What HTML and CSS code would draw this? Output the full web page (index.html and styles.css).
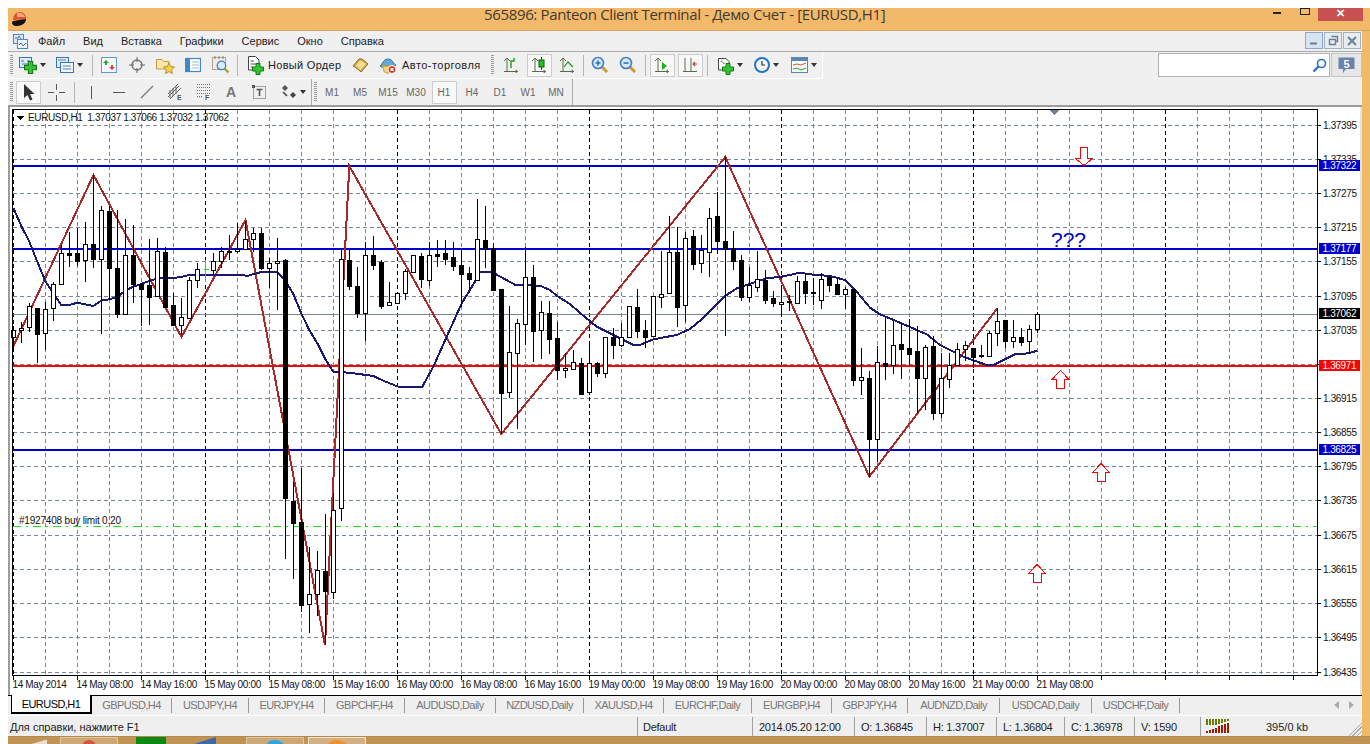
FILE: index.html
```html
<!DOCTYPE html>
<html lang="ru">
<head>
<meta charset="utf-8">
<title>565896: Panteon Client Terminal</title>
<link rel="stylesheet" href="styles.css">
</head>
<body>
<svg class="defs" width="0" height="0" aria-hidden="true">
  <defs>
    <symbol id="plus" viewBox="0 0 12 12"><path d="M4 0.5H8V4H11.5V8H8V11.5H4V8H0.5V4H4Z" fill="#35c435" stroke="#127a12"/></symbol>
    <symbol id="lens" viewBox="0 0 18 18"><path d="M11 11L16 16" stroke="#c79a2c" stroke-width="3"/><circle cx="7" cy="7" r="5.5" fill="#d8e9fb" stroke="#3f7fc4" stroke-width="1.6"/></symbol>
    <symbol id="axes" viewBox="0 0 16 16"><path d="M4 1V15M1 14.5H15M1 4L4 1L7 4" fill="none" stroke="#5a6b4a"/><path d="M12 14.5L14 13M12 14.5L14 16" fill="none" stroke="#5a6b4a"/></symbol>
  </defs>
</svg>
<div class="win">
  <header class="title">
    <svg class="logo" width="16" height="16" viewBox="0 0 16 16"><path d="M2 9C2 4 5 1 9 1C13 1 15 4 15 8Z" fill="#e8502a"/><path d="M6 2C9 1 13 2 14 6L6 6Z" fill="#f6a77e"/><path d="M1 11C3 9 10 9 15 8C15 12 11 15 6 15C3 15 1 14 1 11Z" fill="#111"/></svg>
    <span class="title-text">565896: Panteon Client Terminal - Демо Счет - [EURUSD,H1]</span>
    <div class="win-btns">
      <span class="w-min"></span>
      <span class="w-max"></span>
      <span class="w-close">✕</span>
    </div>
  </header>
  <div class="frame">
    <nav class="menu">
      <svg class="menu-ico" width="15" height="15" viewBox="0 0 15 15"><rect x="0.5" y="0.5" width="10" height="9" fill="#dbe9f7" stroke="#4a86c8"/><rect x="4.5" y="5.5" width="10" height="9" fill="#eef5fb" stroke="#4a86c8"/><path d="M2 4H5L6 2L8 5M6 11L8 9L10 12L13 9" fill="none" stroke="#4a6f9a"/></svg>
      <span>Файл</span><span>Вид</span><span>Вставка</span><span>Графики</span><span>Сервис</span><span>Окно</span><span>Справка</span>
      <div class="doc-btns">
        <span class="doc-btn active"><svg width="10" height="10" viewBox="0 0 10 10"><path d="M1 7.5H8" stroke="#6a7f93" stroke-width="2"/></svg></span>
        <span class="doc-btn"><svg width="11" height="11" viewBox="0 0 11 11"><path d="M3.5 1.5H9.5V6.5H7.5M1.5 4.5H7.5V9.5H1.5Z" fill="none" stroke="#6a7f93" stroke-width="1.4"/></svg></span>
        <span class="doc-btn"><svg width="10" height="10" viewBox="0 0 10 10"><path d="M1 1L9 9M9 1L1 9" stroke="#6a7f93" stroke-width="2"/></svg></span>
      </div>
    </nav>
    <div class="row row-1">
      <div class="tb tb-1">
        <span class="grip grip-8"></span>
        <span class="ib drop w34 p3"><svg width="18" height="18" viewBox="0 0 18 18"><rect x="0.5" y="1.5" width="12" height="10" fill="#dcebf9" stroke="#3f74ad"/><path d="M2 5H5M8 5H11M3 8H10" stroke="#3f74ad"/><use href="#plus" x="5" y="5" width="13" height="13"/></svg><i class="tri"></i></span>
        <span class="ib drop w38 p6"><svg width="18" height="18" viewBox="0 0 18 18"><rect x="0.5" y="1.5" width="12" height="10" fill="#dcebf9" stroke="#3f74ad"/><rect x="4.5" y="6.5" width="13" height="10" fill="#eef5fc" stroke="#3f74ad"/><path d="M2 4H10M7 10H15M7 13H15" stroke="#5d86b3"/></svg><i class="tri"></i></span>
        <i class="sep"></i>
        <span class="ib"><svg width="16" height="16" viewBox="0 0 16 16"><rect x="0.5" y="0.5" width="15" height="15" fill="#f4f8fc" stroke="#5d9bd5"/><path d="M5 3L8 6H6V8H4V6H2Z" fill="#2aa52a"/><path d="M11 13L8 10H10V8H12V10H14Z" fill="#d8452a"/></svg></span>
        <span class="ib"><svg width="16" height="16" viewBox="0 0 16 16"><circle cx="8" cy="8" r="5" fill="none" stroke="#777" stroke-width="1.4"/><path d="M8 0V5M8 11V16M0 8H5M11 8H16" stroke="#666"/></svg></span>
        <span class="ib"><svg width="19" height="17" viewBox="0 0 19 17"><path d="M0.5 2.5H6L8 4.5H13V12H0.5Z" fill="#fbe6a6" stroke="#b89a4a"/><path d="M13 6L14.6 9.5L18.5 10L15.6 12.6L16.4 16.5L13 14.5L9.6 16.5L10.4 12.6L7.5 10L11.4 9.5Z" fill="#f6d34e" stroke="#b8902a"/></svg></span>
        <span class="ib"><svg width="16" height="16" viewBox="0 0 16 16"><rect x="0.5" y="1.5" width="15" height="13" fill="#fff" stroke="#3f86cc" stroke-width="1.2"/><rect x="1" y="2" width="4" height="12" fill="#3f86cc"/><path d="M7 5H14M7 8H14M7 11H14" stroke="#9ab7d3"/></svg></span>
        <span class="ib"><svg width="18" height="18" viewBox="0 0 18 18"><rect x="0.5" y="1.5" width="13" height="12" fill="#f2ece4" stroke="#b4a393"/><path d="M3 0V3M7 0V3M11 0V3" stroke="#8a7a6a"/><use href="#lens" x="4" y="4" width="14" height="14"/></svg></span>
        <i class="sep s2b"></i>
        <span class="txt-btn order"><svg width="17" height="19" viewBox="0 0 17 19"><path d="M1.5 0.5H8.5L12 4V14H1.5Z" fill="#fff" stroke="#444"/><path d="M3.5 5H7M3.5 8H9M3.5 11H6" stroke="#555"/><use href="#plus" x="5" y="7" width="12" height="12"/></svg><span class="spaced sp-order">Новый Ордер</span></span>
        <span class="ib"><svg width="17" height="17" viewBox="0 0 17 17"><path d="M1 9L7 2C9 1 12 3 16 7L9 15C6 12 3 10 1 9Z" fill="#d9a93f" stroke="#8a6a1e"/><path d="M3.500 9L8 3.500C10 4 12 5.500 14 7L8.500 13C7 11.500 5 10 3.500 9Z" fill="#f2dc94"/></svg></span>
        <span class="txt-btn auto"><svg width="18" height="18" viewBox="0 0 18 18"><path d="M1 10C4 8 4 3 9 3C14 3 14 8 17 9C13 13 5 13 1 10Z" fill="#63a8d8" stroke="#3b6f96"/><path d="M3 10C6 14 3 16 8 17C11 17 14 15 15 10Z" fill="#f5d569" stroke="#b9952b"/><circle cx="13" cy="13.5" r="4" fill="#d63a22" stroke="#fff"/><rect x="11.5" y="12" width="3" height="3" fill="#fff"/></svg><span class="spaced sp-auto">Авто-торговля</span></span>
        <span class="grip grip-8 g3"></span>
        <span class="ib"><svg width="16" height="16" viewBox="0 0 16 16"><use href="#axes" width="16" height="16"/><path d="M8 11V4H11V1" fill="none" stroke="#1a9a1a" stroke-width="1.4"/></svg></span>
        <span class="ib sel"><svg width="16" height="16" viewBox="0 0 16 16"><use href="#axes" width="16" height="16"/><rect x="8" y="3" width="5" height="7" fill="#22c422" stroke="#0d5c0d"/><path d="M10.5 0V3M10.5 10V13" stroke="#0d5c0d"/></svg></span>
        <span class="ib"><svg width="16" height="16" viewBox="0 0 16 16"><use href="#axes" width="16" height="16"/><path d="M5 10L9 5L14 10" fill="none" stroke="#1a9a1a" stroke-width="1.2"/></svg></span>
        <i class="sep s2b"></i>
        <span class="ib"><svg width="18" height="18" viewBox="0 0 18 18"><use href="#lens" width="18" height="18"/><path d="M4.5 7H9.5M7 4.5V9.5" stroke="#2f6fb5" stroke-width="1.6"/></svg></span>
        <span class="ib"><svg width="18" height="18" viewBox="0 0 18 18"><use href="#lens" width="18" height="18"/><path d="M4.5 7H9.5" stroke="#2f6fb5" stroke-width="1.6"/></svg></span>
        <i class="sep s3"></i>
        <span class="ib sel"><svg width="16" height="16" viewBox="0 0 16 16"><use href="#axes" width="16" height="16"/><path d="M8 5L13 9L8 13Z" fill="#1fae1f"/></svg></span>
        <span class="ib sel"><svg width="16" height="16" viewBox="0 0 16 16"><path d="M3 1V15M1 14.5H15M9 1V15" fill="none" stroke="#5a6b4a"/><path d="M11 7H15M11 7L13 5M11 7L13 9" fill="none" stroke="#b5432a" stroke-width="1.2"/></svg></span>
        <i class="sep s3"></i>
        <span class="ib drop w37 p7"><svg width="17" height="19" viewBox="0 0 17 19"><path d="M1.5 2.5H9L12 5.5V14H1.5Z" fill="#fff" stroke="#444"/><path d="M4 6C5 3 6 9 8 7" fill="none" stroke="#666"/><use href="#plus" x="5" y="7" width="12" height="12"/></svg><i class="tri"></i></span>
        <span class="ib drop w37 p7"><svg width="16" height="16" viewBox="0 0 16 16"><circle cx="8" cy="8" r="7" fill="#f4f8fc" stroke="#2375c4" stroke-width="2"/><path d="M8 4V8H11" fill="none" stroke="#234" stroke-width="1.2"/></svg><i class="tri"></i></span>
        <span class="ib drop w37 p7"><svg width="17" height="16" viewBox="0 0 17 16"><rect x="0.5" y="0.5" width="16" height="15" fill="#f7fafc" stroke="#5a88b5"/><rect x="1" y="1" width="15" height="3" fill="#5a88b5"/><path d="M2 8L6 7L10 8L15 6" fill="none" stroke="#d8552a"/><path d="M2 12L6 11L10 13L15 11" fill="none" stroke="#2aa52a"/></svg><i class="tri"></i></span>
      </div>
      <div class="search">
        <svg class="search-ico" width="15" height="15" viewBox="0 0 15 15"><circle cx="9.5" cy="5.5" r="4" fill="#fff" stroke="#2f6fc4" stroke-width="1.6"/><path d="M6.5 8.5L1.5 13.5" stroke="#2f6fc4" stroke-width="2.4"/></svg>
      </div>
      <span class="msg"><svg width="17" height="17" viewBox="0 0 17 17"><path d="M0.5 0.5H16.5V12H8L5 16V12H0.5Z" fill="#6a82ac"/><text x="8.5" y="10.5" class="msg-num">5</text></svg></span>
    </div>
    <div class="row row-2">
      <div class="tb tb-2">
        <span class="grip grip-6"></span>
        <span class="ib sel"><svg width="16" height="18" viewBox="0 0 16 18"><path d="M4 1V15L7.5 12L10 17.5L12.5 16.5L10 11H14.5Z" fill="#333"/></svg></span>
        <span class="ib"><svg width="17" height="17" viewBox="0 0 17 17"><path d="M8.5 0V6M8.5 11V17M0 8.5H6M11 8.5H17" stroke="#555"/></svg></span>
        <i class="sep"></i>
        <span class="ib"><svg width="16" height="16" viewBox="0 0 16 16"><path d="M8.5 2V15" stroke="#555"/></svg></span>
        <span class="ib"><svg width="16" height="16" viewBox="0 0 16 16"><path d="M2 8.5H14" stroke="#555"/></svg></span>
        <span class="ib"><svg width="16" height="16" viewBox="0 0 16 16"><path d="M2 14L14 2" stroke="#777" stroke-width="1.2"/></svg></span>
        <span class="ib"><svg width="17" height="18" viewBox="0 0 17 18"><path d="M1 11L11 1M1 14L12 3M3 16L14 5M3 7V15M6 5V13M9 3V11" stroke="#666" fill="none"/><text x="10" y="17" class="mini">E</text></svg></span>
        <span class="ib"><svg width="15" height="18" viewBox="0 0 15 18"><path d="M1 1.500H14M1 4.500H14M1 7.500H14M1 10.500H14M1 13.500H7" stroke="#777" stroke-dasharray="1 1"/><text x="9" y="17" class="mini">F</text></svg></span>
        <span class="ib glyph">A</span>
        <span class="ib"><svg width="15" height="15" viewBox="0 0 15 15"><rect x="1.500" y="1.500" width="12" height="12" fill="none" stroke="#555" stroke-dasharray="1 1"/><path d="M0 0H3V3H0Z" fill="#555"/><path d="M4.500 4.500H10.500M7.500 4.500V11" stroke="#555" stroke-width="1.6"/></svg></span>
        <span class="ib drop w34 p8"><svg width="16" height="15" viewBox="0 0 16 15"><path d="M1 3L4 0L7 3L4 6Z" fill="#555"/><path d="M9 10L12 7L15 10L12 13Z" fill="#444"/><path d="M2 7L6 11" stroke="#444" stroke-width="1.6"/></svg><i class="tri"></i></span>
        <i class="sep s5 tall"></i>
        <span class="grip grip-6"></span>
        <span class="ib tf">M1</span><span class="ib tf">M5</span><span class="ib tf">M15</span><span class="ib tf">M30</span><span class="ib tf sel">H1</span><span class="ib tf">H4</span><span class="ib tf">D1</span><span class="ib tf">W1</span><span class="ib tf">MN</span>
        <i class="sep s2 tall"></i>
      </div>
    </div>
    <main class="chart-pane">
      <svg class="chart" viewBox="8 105 1354 590" width="1354" height="590">
        <path class="grid" d="M13 125.500H1317M13 159.500H1317M13 193.500H1317M13 227.500H1317M13 261.500H1317M13 296.500H1317M13 330.500H1317M13 364.500H1317M13 398.500H1317M13 432.500H1317M13 466.500H1317M13 500.500H1317M13 535.500H1317M13 569.500H1317M13 603.500H1317M13 637.500H1317M13 672.500H1317"/>
        <path class="grid" d="M45.500 110V675M77.500 110V675M109.500 110V675M141.500 110V675M173.500 110V675M237.500 110V675M269.500 110V675M301.500 110V675M333.500 110V675M365.500 110V675M429.500 110V675M461.500 110V675M493.500 110V675M525.500 110V675M557.500 110V675M621.500 110V675M653.500 110V675M685.500 110V675M717.500 110V675M749.500 110V675M813.500 110V675M845.500 110V675M877.500 110V675M909.500 110V675M941.500 110V675M1005.500 110V675M1037.500 110V675M1069.500 110V675M1101.500 110V675M1133.500 110V675M1197.500 110V675M1229.500 110V675M1261.500 110V675M1293.500 110V675"/>
        <path class="grid-sep" d="M13.500 110V675M205.500 110V675M397.500 110V675M589.500 110V675M781.500 110V675M973.500 110V675M1165.500 110V675"/>
        <path class="bid" d="M13 314.500H1317"/>
        <path class="hl-blue" d="M13 166H1317M13 249H1317M13 450H1317"/>
        <path class="hl-red" d="M13 366H1317"/>
        <path class="hl-green" d="M13 526.500H1317"/>
        <polyline class="zigzag" points="13,347 93.500,175 181.500,337 245.500,220 325,645 349.300,166 501.300,434 725.300,157 869.300,476.700 997.300,308.300"/>
        <polyline class="ma" points="13.300,207.700 21.300,226 29.300,241.700 37.300,261.700 45.300,281 53.300,293.300 61.300,305 69.300,305 77.300,302.700 85.300,304.300 93.300,306 101.300,300.700 109.300,299.300 117.300,296.700 125.300,290.700 133.300,286.700 141.300,284 149.300,281 157.300,278.300 165.300,278 173.300,278 181.300,277 189.300,275 197.300,275 213.300,274.700 237.300,275 248,275.700 261.300,272 277.300,272 285.300,280.700 293.300,294 301.300,313.300 309.300,330 317.300,343.300 325.300,359.300 333.300,371.700 349.300,372.700 373.300,376 383.300,380.700 398.300,386.700 422.300,386.700 433.300,366.700 446.700,336.700 461.700,303.300 475,281.700 480,272 491.700,272 503.300,278.300 515,284.700 540,285.700 550,290 556.700,295.700 570,304 583.300,315.700 596.700,326.700 616.700,336.700 633.300,345 640,345 653.300,339.300 676.700,335 690,329 700,320.700 725,296 736.700,288.300 766.700,278.300 781.700,276.700 800,272.700 813.300,274.700 830,276 845,280 856.700,291.700 870,307.700 880,314.300 900,322.700 926.700,334.300 940,345 963.300,356.700 986.700,365 993.300,365 1010,356.700 1015,354.300 1028.300,353.300 1037.300,350.700"/>
        <g id="candles"></g>
        <rect class="frame-line" x="12.500" y="109.500" width="1305" height="566"/>
        <path class="ticks" d="M1318 125.500H1321M1318 159.500H1321M1318 193.500H1321M1318 227.500H1321M1318 261.500H1321M1318 296.500H1321M1318 330.500H1321M1318 364.500H1321M1318 398.500H1321M1318 432.500H1321M1318 466.500H1321M1318 500.500H1321M1318 535.500H1321M1318 569.500H1321M1318 603.500H1321M1318 637.500H1321M1318 672.500H1321M13.500 676V680M77.500 676V680M141.500 676V680M205.500 676V680M269.500 676V680M333.500 676V680M397.500 676V680M461.500 676V680M525.500 676V680M589.500 676V680M653.500 676V680M717.500 676V680M781.500 676V680M845.500 676V680M909.500 676V680M973.500 676V680M1037.500 676V680M1101.500 676V680M1165.500 676V680M1229.500 676V680M1293.500 676V680"/>
        <path class="shift-mark" d="M1050 110H1059L1054.500 115Z"/>
        <path class="arrow" d="M1080.500 147.500H1087.500V158.500H1092.500L1084 165.500L1075.500 158.500H1080.500Z"/>
        <path class="arrow" d="M1060.500 370.500L1069 379.500H1064.500V388.500H1056.500V379.500H1052Z"/>
        <path class="arrow" d="M1101 463.500L1109.500 472.500H1105V481.500H1097V472.500H1092.500Z"/>
        <path class="arrow" d="M1037 564.500L1045.500 573.500H1041V582.500H1033V573.500H1028.500Z"/>
        <text x="1051" y="247" class="qmarks">???</text>
        <path class="legend-tri" d="M16.500 116H24.500L20.500 120Z"/>
        <text x="28" y="121" class="legend" textLength="201">EURUSD,H1  1.37037 1.37066 1.37032 1.37062</text>
        <text x="19" y="524" class="legend" textLength="102">#1927408 buy limit 0.20</text>
        <g class="prices">
          <text x="1323" y="128.500">1.37395</text><text x="1323" y="162.500">1.37335</text><text x="1323" y="196.500">1.37275</text><text x="1323" y="230.500">1.37215</text><text x="1323" y="264.500">1.37155</text><text x="1323" y="299.500">1.37095</text><text x="1323" y="333.500">1.37035</text><text x="1323" y="401.500">1.36915</text><text x="1323" y="435.500">1.36855</text><text x="1323" y="469.500">1.36795</text><text x="1323" y="503.500">1.36735</text><text x="1323" y="538.500">1.36675</text><text x="1323" y="572.500">1.36615</text><text x="1323" y="606.500">1.36555</text><text x="1323" y="640.500">1.36495</text><text x="1323" y="675.500">1.36435</text>
        </g>
        <rect class="tag-blue" x="1319" y="160" width="41" height="11"/>
        <rect class="tag-blue" x="1319" y="243" width="41" height="11"/>
        <rect class="tag-black" x="1319" y="308" width="41" height="11"/>
        <rect class="tag-red" x="1319" y="360" width="41" height="11"/>
        <rect class="tag-blue" x="1319" y="444" width="41" height="11"/>
        <g class="tag-text">
          <text x="1322.500" y="169">1.37322</text><text x="1322.500" y="252">1.37177</text><text x="1322.500" y="317">1.37062</text><text x="1322.500" y="369">1.36971</text><text x="1322.500" y="453">1.36825</text>
        </g>
        <g class="dates">
          <text x="12.500" y="688">14 May 2014</text><text x="76.500" y="688">14 May 08:00</text><text x="140.500" y="688">14 May 16:00</text><text x="204.500" y="688">15 May 00:00</text><text x="268.500" y="688">15 May 08:00</text><text x="332.500" y="688">15 May 16:00</text><text x="396.500" y="688">16 May 00:00</text><text x="460.500" y="688">16 May 08:00</text><text x="524.500" y="688">16 May 16:00</text><text x="588.500" y="688">19 May 00:00</text><text x="652.500" y="688">19 May 08:00</text><text x="716.500" y="688">19 May 16:00</text><text x="780.500" y="688">20 May 00:00</text><text x="844.500" y="688">20 May 08:00</text><text x="908.500" y="688">20 May 16:00</text><text x="972.500" y="688">21 May 00:00</text><text x="1036.500" y="688">21 May 08:00</text>
        </g>
      </svg>
    </main>
    <div class="tabs">
      <span class="tab active">EURUSD,H1</span>
      <span class="tab w80">GBPUSD,H4</span>
      <span class="tab w77">USDJPY,H4</span>
      <span class="tab w76">EURJPY,H4</span>
      <span class="tab w80">GBPCHF,H4</span>
      <span class="tab w91">AUDUSD,Daily</span>
      <span class="tab w88">NZDUSD,Daily</span>
      <span class="tab w80">XAUUSD,H4</span>
      <span class="tab w88">EURCHF,Daily</span>
      <span class="tab w80">EURGBP,H4</span>
      <span class="tab w76">GBPJPY,H4</span>
      <span class="tab w92">AUDNZD,Daily</span>
      <span class="tab w92">USDCAD,Daily</span>
      <span class="tab w88">USDCHF,Daily</span>
      <span class="tab-nav"><i class="nav-l"></i><i class="nav-r"></i></span>
    </div>
    <footer class="status">
      <span class="cell c-help">Для справки, нажмите F1</span>
      <span class="cell c-prof">Default</span>
      <span class="cell c-date">2014.05.20 12:00</span>
      <span class="cell c-o">O: 1.36845</span>
      <span class="cell c-h">H: 1.37007</span>
      <span class="cell c-l">L: 1.36804</span>
      <span class="cell c-c">C: 1.36978</span>
      <span class="cell c-v">V: 1590</span>
      <span class="cell c-net">
        <svg class="conn" width="24" height="14" viewBox="0 0 24 14"><path d="M1 0V6M4 0V6M7 0V6M10 0V6M13 0V5M16 0V4M19 0V3M22 0V2" stroke="#6a7f00" stroke-width="2"/><path d="M1 12V14M4 11V14M7 10V14M10 9V14M13 7V14M16 6V14M19 5V14M22 4V14" stroke="#a01a00" stroke-width="2"/></svg>
        <span class="traffic">395/0 kb</span>
        <span class="resize"></span>
      </span>
    </footer>
  </div>
  <div class="taskbar">
    <i class="white-wedge"></i>
    <span class="task t1"><i class="dot red"></i></span>
    <i class="green-tile"></i>
    <i class="blue-wedge"></i>
    <span class="task t2"><i class="dot blue"></i></span>
    <span class="task t3"><i class="dot orange"></i></span>
  </div>
</div>
<script src="chart.js"></script>
</body>
</html>
```
FILE: styles.css
```css
* { box-sizing: border-box; }
html, body { margin: 0; height: 744px; overflow: hidden; background: #fff; }
body { font: 11px "Liberation Sans", Arial, sans-serif; color: #111; }
i { font-style: normal; display: block; }
.defs { position: absolute; }
.win { display: flex; flex-direction: column; height: 744px; padding: 8px 0 0 8px; }

.title { height: 23px; flex: none; display: flex; align-items: center; position: relative; background: #f3b96b; border-bottom: 1px solid #d9a45c; }
.logo { margin-left: 3px; }
.title-text { position: absolute; left: 476px; top: -1px; font: 15px/15px "Open Sans", sans-serif; letter-spacing: -.35px; color: #3f3a34; white-space: nowrap; }
.win-btns { margin-left: auto; display: flex; align-items: flex-start; align-self: flex-start; height: 13px; margin-right: 7px; }
.w-min { width: 8px; height: 2px; background: #222; margin: 4px 19px 0 0; }
.w-max { width: 10px; height: 7px; border: 1px solid #222; border-top-width: 1px; margin-right: 8px; }
.w-close { width: 45px; height: 13px; background: #c75050; color: #fff; font-size: 11px; line-height: 10px; text-align: center; font-weight: bold; overflow: hidden; }

.frame { flex: 1; min-height: 0; display: flex; flex-direction: column; border-right: 8px solid #f3b96b; background: #f0f0f0; }
.menu { height: 21px; flex: none; display: flex; align-items: center; gap: 18px; border-bottom: 1px solid #a9a9a9; padding-right: 1px; }
.menu > span { color: #222; }
.menu-ico { margin: 0 -8px 0 5px; flex: none; }
.doc-btns { margin-left: auto; display: flex; gap: 1px; align-self: flex-start; margin-top: 1px; }
.doc-btn { width: 18px; height: 17px; border: 1px solid #9fb2c3; background: #e8ecef; display: flex; align-items: center; justify-content: center; }
.doc-btn.active { background: #d5e5f2; border-color: #8fa8bf; }

.row { flex: none; display: flex; align-items: stretch; }
.row-1 { height: 27px; }
.row-2 { height: 26px; }
.tb { display: flex; align-items: center; }
.tb-1 { width: 815px; border-right: 1px solid #fff; border-bottom: 1px solid #fff; }
.grip { height: 20px; flex: none; background: repeating-linear-gradient(to bottom, #9a9a9a 0 1px, transparent 1px 2px) no-repeat 2px 0 / 3px 100%; }
.grip-8 { width: 8px; }
.grip-6 { width: 6px; }
.g3 { margin-left: 3px; }
.sep { width: 1px; height: 21px; background: #b5b5b5; margin: 0 2px 0 4px; flex: none; }
.s2b { margin-left: 2px; }
.s3 { margin-left: 3px; }
.s5 { margin: 0 0 0 4px; }
.s2 { margin: 0 0 0 2px; }
.tall { height: 26px; background: #a8a8a8; }
.ib { width: 28px; height: 23px; flex: none; display: flex; align-items: center; justify-content: center; }
.ib.sel { width: 25px; margin: 0 1.500px; background: #f8f8f8; border: 1px solid #cdcdcd; }
.drop { justify-content: flex-start; gap: 3px; }
.w34 { width: 34px; }
.w37 { width: 37px; }
.w38 { width: 38px; }
.p3 { padding-left: 3px; }
.p6 { padding-left: 6px; }
.p7 { padding-left: 7px; }
.p8 { padding-left: 8px; }
.tri { width: 0; height: 0; border: 3.500px solid transparent; border-top: 4px solid #333; border-bottom: 0; flex: none; }
.txt-btn { flex: none; display: flex; align-items: center; height: 23px; }
.order { width: 106px; padding-left: 7px; gap: 4px; }
.auto { width: 112px; padding-left: 5px; gap: 5px; }
.spaced { color: #222; font-size: 11px; white-space: nowrap; }
.sp-order { letter-spacing: .3px; }
.sp-auto { letter-spacing: .47px; }
.glyph { font-size: 14px; color: #777; font-weight: bold; }
.tf { font-size: 10px; color: #666; }
.mini { font: bold 7px "Liberation Sans", sans-serif; fill: #555; }
.search { width: 172px; height: 24px; margin: 1px 0 0 335px; background: #fff; border: 1px solid #b2b2b2; display: flex; align-items: center; justify-content: flex-end; padding-right: 2px; flex: none; }
.msg { width: 31px; height: 24px; margin: 1px 0 0 1px; background: #e6e6e6; border: 1px solid #c4c4c4; display: flex; align-items: center; justify-content: center; flex: none; }
.msg-num { font: bold 11px "Liberation Sans", sans-serif; fill: #fff; text-anchor: middle; }

.chart-pane { height: 590px; flex: none; background: #fff; box-shadow: inset 2px 2px 0 #9c9c9c, inset -2px 0 0 #e2e2e2; }
.chart { display: block; font-family: "Liberation Sans", Arial, sans-serif; shape-rendering: crispEdges; }
.grid { fill: none; stroke: #778899; stroke-width: 1; stroke-dasharray: 4 3; }
.grid-sep { fill: none; stroke: #000; stroke-width: 1; stroke-dasharray: 4 3; }
.bid { stroke: #778899; fill: none; }
.hl-blue { stroke: #0000cd; stroke-width: 2; fill: none; }
.hl-red { stroke: #ff0000; stroke-width: 2; fill: none; }
.hl-green { stroke: #22dd22; fill: none; stroke-dasharray: 8 5 2 5; }
.zigzag { fill: none; stroke: #a52a2a; stroke-width: 2; }
.ma { fill: none; stroke: #191970; stroke-width: 2; }
.frame-line { fill: none; stroke: #000; }
.ticks { stroke: #000; fill: none; }
.shift-mark { fill: #708090; }
.arrow { fill: #fff; stroke: #ff0000; }
.qmarks { font-size: 21px; fill: #0000cd; }
.legend-tri { fill: #000; }
.legend { font-size: 10px; fill: #111; white-space: pre; }
.prices text, .dates text { font-size: 10px; fill: #111; letter-spacing: -.35px; }
.tag-text text { font-size: 10px; fill: #fff; letter-spacing: -.35px; }
.tag-blue { fill: #0000cd; }
.tag-black { fill: #000; }
.tag-red { fill: #ff0000; }
.wick { stroke: #000; fill: none; }
.wick-g { stroke: #22dd22; fill: none; }
.body-w { fill: #fff; stroke: #000; }
.body-b { fill: #000; stroke: #000; }

.tabs { height: 21px; flex: none; display: flex; align-items: flex-start; background: #efefef; border-top: 1px solid #000; border-bottom: 1px solid #fff; padding-left: 3px; }
.tab { height: 15px; margin-top: 2px; line-height: 15px; text-align: center; color: #777; border-right: 1px solid #999; letter-spacing: -.55px; white-space: nowrap; flex: none; }
.tab.active { width: 81px; height: 19px; margin-top: -1px; line-height: 18px; color: #000; background: #fff; border: 1px solid #000; border-width: 0 2px 2px 1px; }
.w76 { width: 76px; }
.w77 { width: 77px; }
.w80 { width: 80px; }
.w88 { width: 88px; }
.w91 { width: 91px; }
.w92 { width: 92px; }
.tab-nav { display: flex; gap: 10px; margin: 5px 8px 0 auto; }
.nav-l { width: 0; height: 0; border: 4px solid transparent; border-right: 5px solid #aaa; border-left: 0; }
.nav-r { width: 0; height: 0; border: 4px solid transparent; border-left: 5px solid #aaa; border-right: 0; }

.status { height: 20px; flex: none; display: flex; align-items: center; background: #efefef; }
.cell { height: 19px; padding-top: 2px; display: flex; align-items: center; flex: none; border-left: 1px solid #a0a0a0; padding-left: 6px; letter-spacing: -.25px; color: #222; white-space: nowrap; }
.c-help { width: 629px; border-left: 0; padding-left: 2px; letter-spacing: 0; }
.c-prof { width: 115px; padding-left: 5px; }
.c-date { width: 102px; }
.c-o { width: 72px; }
.c-h { width: 70px; }
.c-l { width: 68px; }
.c-c { width: 70px; }
.c-v { width: 66px; }
.c-net { flex: 1; position: relative; padding-left: 5px; padding-top: 0; }
.traffic { margin-left: 36px; letter-spacing: 0; padding-top: 2px; }
.resize { position: absolute; right: 0; bottom: -1px; width: 14px; height: 14px; background: repeating-linear-gradient(135deg, #aaa 0 1px, transparent 1px 3px); clip-path: polygon(100% 0, 100% 100%, 0 100%); }

.taskbar { height: 8px; flex: none; background: #bf9455; display: flex; align-items: flex-start; border-top: 1px solid #b5894c; overflow: hidden; }
.task { width: 58px; height: 12px; flex: none; background: #cda877; border: 1px solid #e0c6a0; display: flex; justify-content: center; }
.t1 { margin-left: 13px; }
.t2 { margin-left: 30px; }
.t3 { margin-left: 4px; background: #d3b083; border-color: #f2e6d4; }
.dot { width: 18px; height: 18px; border-radius: 50%; margin-top: 2px; }
.red { background: #d2553f; width: 14px; height: 14px; }
.blue { background: #2ea4e0; width: 22px; height: 22px; }
.orange { background: #ef8f2f; width: 24px; height: 24px; }
.white-wedge { width: 19px; height: 8px; margin-left: 20px; background: #e8dfd0; clip-path: polygon(0 100%, 100% 30%, 100% 100%); flex: none; }
.green-tile { width: 30px; height: 8px; background: #0a8a14; margin-left: 18px; flex: none; }
.blue-wedge { width: 25px; height: 8px; background: #3a6aa8; margin-left: 25px; clip-path: polygon(0 100%, 100% 0, 100% 100%); flex: none; }
```
FILE: chart.js
```js
// [high, body top, body bottom, low, kind] in page pixels, one candle per 8px
var CANDLES = [
[326,330,337,350,'w'],[322,328,330,343,'w'],[303,306,327,332,'w'],[308,308,334,363,'b'],[302,309,333,350,'w'],
[282,284,308,321,'w'],[245,253,284,284,'w'],[232,253,255,267,'b'],[228,253,261,266,'b'],[222,244,260,282,'w'],
[175,244,259,268,'b'],[206,210,259,334,'w'],[206,211,268,300,'b'],[210,268,314,318,'b'],[219,255,314,314,'w'],
[225,255,284,303,'b'],[283,284,289,326,'b'],[239,285,297,325,'b'],[238,251,296,297,'w'],[247,252,307,307,'b'],
[293,305,325,325,'b'],[298,317,325,335,'w'],[277,280,318,318,'w'],[263,269,280,288,'w'],[260,269,269,282,'g'],
[253,261,270,274,'w'],[247,251,261,268,'w'],[235,251,252,260,'b'],[223,249,251,253,'w'],[221,239,249,249,'w'],
[228,233,239,252,'w'],[228,233,268,270,'b'],[258,263,268,288,'w'],[238,261,263,310,'w'],[259,260,498,559,'b'],
[482,501,523,579,'b'],[468,522,605,612,'b'],[547,594,604,633,'w'],[551,570,594,616,'w'],[514,571,591,645,'b'],
[493,510,592,599,'w'],[248,259,508,521,'w'],[250,260,286,290,'b'],[267,286,313,318,'b'],[242,255,313,341,'w'],
[236,255,265,270,'b'],[260,262,306,309,'b'],[282,302,305,305,'w'],[293,293,303,303,'w'],[269,271,293,300,'w'],
[255,255,272,273,'w'],[253,256,279,288,'b'],[242,255,280,286,'w'],[240,254,256,267,'b'],[240,253,259,265,'b'],
[242,257,266,271,'b'],[250,265,274,307,'b'],[267,273,279,293,'b'],[199,239,280,280,'w'],[206,240,249,268,'b'],
[243,248,290,290,'b'],[289,289,393,434,'b'],[306,352,392,398,'w'],[319,323,353,429,'w'],[247,277,324,345,'w'],
[265,277,331,362,'b'],[301,312,330,359,'w'],[301,313,339,354,'b'],[322,338,370,380,'b'],[353,368,370,378,'w'],
[350,362,369,369,'w'],[358,363,394,395,'b'],[343,363,392,395,'w'],[362,363,373,377,'b'],[337,337,373,378,'w'],
[328,337,345,359,'b'],[323,337,345,347,'w'],[306,306,337,337,'w'],[289,307,331,338,'b'],[320,330,337,348,'b'],
[296,296,336,336,'w'],[251,294,297,308,'w'],[216,252,293,293,'w'],[227,252,307,327,'b'],[232,238,305,322,'w'],
[230,236,264,270,'b'],[235,250,263,273,'w'],[208,218,252,277,'w'],[192,216,241,254,'b'],[157,241,249,336,'b'],
[231,248,261,270,'b'],[255,260,297,301,'b'],[267,285,297,302,'w'],[251,279,287,292,'w'],[270,280,300,304,'b'],
[291,298,303,307,'b'],[289,302,304,316,'w'],[295,301,302,311,'b'],[276,281,303,303,'w'],[273,281,293,304,'b'],
[278,292,293,305,'b'],[273,279,300,309,'w'],[275,277,285,292,'b'],[278,284,294,294,'b'],[287,289,294,309,'w'],
[289,289,380,386,'b'],[348,377,380,395,'w'],[371,378,439,477,'b'],[346,362,439,462,'w'],[318,363,366,380,'b'],
[321,345,365,374,'w'],[323,344,349,379,'b'],[319,348,354,365,'b'],[326,351,378,413,'b'],[345,347,378,410,'w'],
[336,346,413,420,'b'],[353,378,413,418,'w'],[353,365,379,388,'w'],[343,349,365,365,'w'],[341,345,349,361,'w'],
[348,348,357,368,'b'],[345,355,356,358,'b'],[331,333,356,356,'w'],[308,321,333,346,'w'],[320,320,341,348,'b'],
[320,337,341,348,'w'],[328,337,342,346,'b'],[325,329,341,354,'w'],[312,314,329,333,'w']
];
var NS = 'http://www.w3.org/2000/svg';
var group = document.getElementById('candles');
function el(name, attrs) {
  var node = document.createElementNS(NS, name);
  for (var key in attrs) node.setAttribute(key, attrs[key]);
  group.appendChild(node);
}
CANDLES.forEach(function (c, i) {
  var x = 13.5 + 8 * i, kind = c[4];
  el('path', { 'class': kind === 'g' ? 'wick-g' : 'wick', d: 'M' + x + ' ' + c[0] + 'V' + c[3] });
  if (kind === 'g') {
    el('path', { 'class': 'wick-g', d: 'M' + (x - 2) + ' ' + (c[1] + .5) + 'H' + (x + 3) });
  } else {
    el('rect', { 'class': kind === 'w' ? 'body-w' : 'body-b', x: x - 2, y: c[1] + .5, width: 4, height: Math.max(c[2] - c[1], 1) });
  }
});
```
